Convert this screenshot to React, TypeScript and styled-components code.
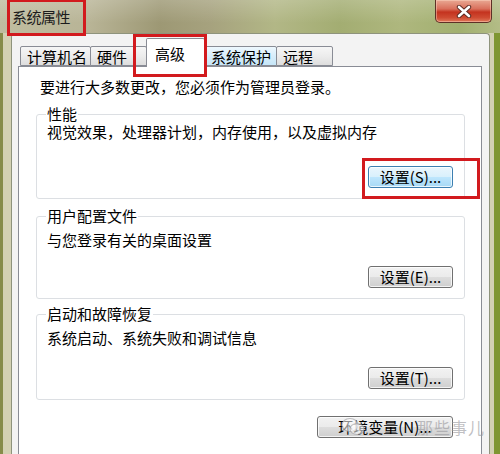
import styled, { createGlobalStyle } from "styled-components"

const GlobalStyle = createGlobalStyle`
  html, body {
    margin: 0;
    padding: 0;
    background: #ffffff;
  }
  body {
    font-family: "Noto Sans CJK SC", "Liberation Sans", sans-serif;
  }
`

const Window = styled.div`
  width: 500px;
  height: 454px;
  overflow: hidden;
  display: flex;
  flex-direction: column;
  font-family: "Noto Sans CJK SC", "Liberation Sans", sans-serif;
  font-size: 15px;
  color: #000;`

const TitleBar = styled.div`
  height: 33px;
  flex: none;
  display: flex;
  justify-content: space-between;
  align-items: flex-start;
  padding-left: 12px;
  background:
    linear-gradient(180deg, rgba(255,255,255,0.18), rgba(255,255,255,0) 70%),
    linear-gradient(90deg, #bfbda0 0%, #b8b496 18%, #9d9874 32%, #a6a27e 42%, #b2b786 55%, #a3ad72 68%, #aeb77e 80%, #a2b070 92%, #b3bc86 100%);`

const TitleText = styled.span`
  position: relative;
  margin-top: 8px;
  line-height: 17px;
  color: #1c1c1c;
  letter-spacing: -0.5px;`

const CloseButton = styled.div`
  width: 57px;
  height: 23px;
  margin-right: 8px;
  box-sizing: border-box;
  display: flex;
  align-items: center;
  justify-content: center;
  border: 1px solid #5e3026;
  border-top: none;
  border-radius: 0 0 5px 5px;
  background: linear-gradient(180deg, #e9a893 0%, #d9705c 40%, #c4331f 55%, #cf4b32 80%, #e07a5c 100%);
  box-shadow: inset 0 0 0 1px rgba(255, 220, 200, 0.45);`

const Frame = styled.div`
  flex: 1;
  display: flex;
  min-height: 0;
  background: #d3d1b3;
  border-left: 3px solid #868c4a;
  border-right: 6px solid #7f9632;
  padding: 0 4px 0 8px;`

const Body = styled.div`
  flex: 1;
  display: flex;
  flex-direction: column;
  background: #f3f3f3;
  border: 1px solid #8e937c;
  border-bottom: none;
  border-radius: 4px 4px 0 0;
  padding: 4px 7px 0 6px;`

const TabStrip = styled.div`
  position: relative;
  z-index: 1;
  display: flex;
  align-items: flex-end;
  padding-left: 2px;
  margin-bottom: -1px;`

const Tab = styled.div<{ $width: number; $selected?: boolean; $hover?: boolean }>`
  position: relative;
  box-sizing: border-box;
  width: ${p => p.$width}px;
  height: ${p => (p.$selected ? 29 : 20)}px;
  margin-bottom: ${p => (p.$selected ? 0 : 1)}px;
  margin-left: -1px;
  padding: ${p => (p.$selected ? "6px 0 0 8px" : "0 0 0 6px")};
  line-height: ${p => (p.$selected ? 18 : 19)}px;
  border: 1px solid #898c95;
  border-bottom: ${p => (p.$selected ? "none" : "1px solid #898c95")};
  border-radius: 2px 2px 0 0;
  white-space: nowrap;
  z-index: ${p => (p.$selected ? 2 : 0)};
  background: ${p =>
    p.$selected
      ? "#ffffff"
      : p.$hover
      ? "linear-gradient(180deg, #eef8fe 0%, #d8eefb 50%, #c6e6f8 100%)"
      : "linear-gradient(180deg, #f6f6f6 0%, #ececec 50%, #dedede 100%)"};
  &:first-child {
    margin-left: 0;
  }`

const Panel = styled.div`
  flex: 1;
  display: flex;
  flex-direction: column;
  background: #ffffff;
  border: 1px solid #898c95;
  border-bottom: none;
  padding: 11px 16px 0 17px;`

const Intro = styled.div`
  margin-left: 4px;
  line-height: 18px;`

const GroupBox = styled.fieldset<{ $top: number }>`
  margin: ${p => p.$top}px 0 0 0;
  min-width: 0;
  border: 1px solid #dcdfe3;
  border-radius: 3px;
  padding: 0 11px 10px 10px;`

const Legend = styled.legend`
  padding: 0 1px;
  margin-left: -1px;
  line-height: 16px;`

const Description = styled.div<{ $pt: number }>`
  padding-top: ${p => p.$pt}px;
  line-height: 18px;`

const ButtonRow = styled.div<{ $gap: number; $right?: number }>`
  position: relative;
  display: flex;
  justify-content: flex-end;
  margin-top: ${p => p.$gap}px;
  padding-right: ${p => p.$right ?? 0}px;`

const Slot = styled.span`
  position: relative;
  display: inline-flex;`

const Button = styled.button<{ $width?: number; $focused?: boolean }>`
  box-sizing: border-box;
  width: ${p => p.$width ?? 85}px;
  height: 22px;
  padding: 0;
  font-family: inherit;
  font-size: 15px;
  line-height: 20px;
  color: #000;
  text-align: center;
  white-space: nowrap;
  border-radius: 3px;
  border: 1px solid ${p => (p.$focused ? "#3c7fb1" : "#707070")};
  box-shadow: inset 0 0 0 1px rgba(255, 255, 255, 0.75);
  background: ${p =>
    p.$focused
      ? "linear-gradient(180deg, #eaf6fd 0%, #d9f0fc 49%, #bee6fd 51%, #a7d9f5 100%)"
      : "linear-gradient(180deg, #f2f2f2 0%, #ebebeb 49%, #dddddd 51%, #cfcfcf 100%)"};`

const Annotation = styled.span<{ $t: number; $r: number; $b: number; $l: number }>`
  position: absolute;
  top: ${p => p.$t}px;
  right: ${p => p.$r}px;
  bottom: ${p => p.$b}px;
  left: ${p => p.$l}px;
  border: 3px solid #d21a1e;
  pointer-events: none;
  z-index: 5;`

const Watermark = styled.div`
  position: absolute;
  left: 305px;
  top: 1px;
  display: flex;
  align-items: center;
  gap: 52px;
  white-space: nowrap;
  pointer-events: none;
  z-index: 4;`

const WatermarkText = styled.span`
  font-size: 16px;
  line-height: 20px;
  color: rgba(150, 150, 155, 0.6);
  letter-spacing: 1px;`

const CloseIcon = () => (
  <svg width="16" height="13" viewBox="0 0 16 13">
    <path d="M3 2 L13 11 M13 2 L3 11" stroke="#5a2a22" strokeWidth="4.4" strokeLinecap="round" />
    <path d="M3 2 L13 11 M13 2 L3 11" stroke="#ffffff" strokeWidth="2.6" strokeLinecap="round" />
  </svg>
)

const WatermarkIcon = () => (
  <svg width="24" height="20" viewBox="0 0 24 20">
    <ellipse cx="9" cy="8" rx="8" ry="6.5" fill="rgba(255,255,255,0.55)" stroke="rgba(150,150,155,0.6)" strokeWidth="1.2" />
    <ellipse cx="16" cy="12" rx="7" ry="5.5" fill="rgba(255,255,255,0.55)" stroke="rgba(150,150,155,0.6)" strokeWidth="1.2" />
  </svg>
)

export default function App() {
  return (
    <>
      <GlobalStyle />
      <Window>
        <TitleBar>
          <TitleText>
            系统属性
            <Annotation $t={-9} $r={-16} $b={-11} $l={-5} />
          </TitleText>
          <CloseButton>
            <CloseIcon />
          </CloseButton>
        </TitleBar>
        <Frame>
          <Body>
            <TabStrip>
              <Tab $width={71}>计算机名</Tab>
              <Tab $width={57}>硬件</Tab>
              <Tab $width={59} $selected>
                高级
                <Annotation $t={-5} $r={-3} $b={-10} $l={-14} />
              </Tab>
              <Tab $width={73} $hover>系统保护</Tab>
              <Tab $width={57}>远程</Tab>
            </TabStrip>
            <Panel>
              <Intro>要进行大多数更改，您必须作为管理员登录。</Intro>
              <GroupBox $top={10}>
                <Legend>性能</Legend>
                <Description $pt={1}>视觉效果，处理器计划，内存使用，以及虚拟内存</Description>
                <ButtonRow $gap={25}>
                  <Slot>
                    <Button $focused>设置(S)...</Button>
                    <Annotation $t={-8} $r={-27} $b={-11} $l={-6} />
                  </Slot>
                </ButtonRow>
              </GroupBox>
              <GroupBox $top={9}>
                <Legend>用户配置文件</Legend>
                <Description $pt={7}>与您登录有关的桌面设置</Description>
                <ButtonRow $gap={17}>
                  <Button>设置(E)...</Button>
                </ButtonRow>
              </GroupBox>
              <GroupBox $top={7}>
                <Legend>启动和故障恢复</Legend>
                <Description $pt={7}>系统启动、系统失败和调试信息</Description>
                <ButtonRow $gap={20}>
                  <Button>设置(T)...</Button>
                </ButtonRow>
              </GroupBox>
              <ButtonRow $gap={16} $right={12}>
                <Button $width={136}>环境变量(N)...</Button>
                <Watermark>
                  <WatermarkIcon />
                  <WatermarkText>那些事儿</WatermarkText>
                </Watermark>
              </ButtonRow>
            </Panel>
          </Body>
        </Frame>
      </Window>
    </>
  )
}
